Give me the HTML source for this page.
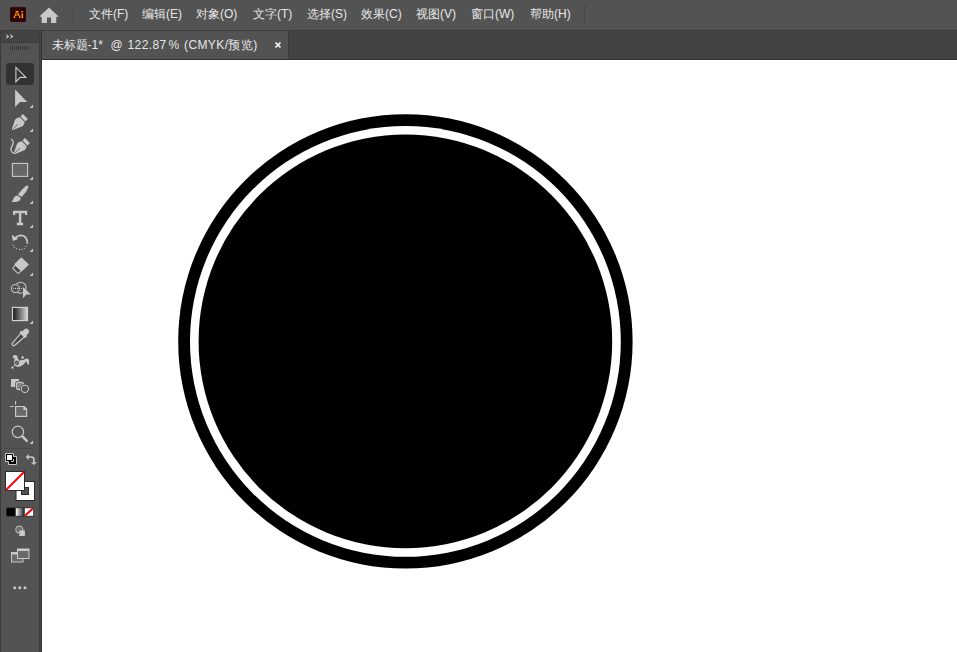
<!DOCTYPE html>
<html><head><meta charset="utf-8">
<style>
*{margin:0;padding:0;box-sizing:border-box}
html,body{width:957px;height:652px;overflow:hidden;background:#535353;font-family:"Liberation Sans",sans-serif}
.abs{position:absolute}
#menubar{left:0;top:0;width:957px;height:30px;background:#535353}
.mi{position:absolute;top:6px;font-size:12px;line-height:16px;color:#e6e6e6;white-space:nowrap}
.sep{position:absolute;top:5px;width:1px;height:19px;background:#474747}
#topline{left:0;top:30px;width:957px;height:1px;background:#3a3a3a}
#tabbar{left:41px;top:31px;width:916px;height:29px;background:#434343}
#tab{left:42px;top:31px;width:246px;height:28px;background:#535353}
#tabline{left:41px;top:59px;width:916px;height:1px;background:#333}
.tt{position:absolute;top:37px;font-size:12px;line-height:16px;color:#e6e6e6;white-space:nowrap}
#canvas{left:42px;top:60px;width:915px;height:592px;background:#fff}
#panel{left:0;top:31px;width:39px;height:621px;background:#535353}
#pl0{left:0;top:31px;width:1px;height:621px;background:#3a3a3a}
#phead{left:1px;top:31px;width:38px;height:11px;background:#434343}
#pheadl{left:0;top:42px;width:39px;height:1px;background:#3a3a3a}
#pr1{left:39px;top:31px;width:1px;height:621px;background:#3e3e3e}
#pr2{left:40px;top:31px;width:1px;height:621px;background:#434343}
#pr3{left:41px;top:31px;width:1px;height:621px;background:#353535}
.grip{position:absolute;top:46px;width:1px;height:4px;background:#363636}
</style></head><body>
<div id="menubar" class="abs"></div>
<div id="topline" class="abs"></div>
<div id="tabbar" class="abs"></div>
<div id="tab" class="abs"></div>
<div id="tabline" class="abs"></div>
<div class="abs" style="left:288px;top:31px;width:1px;height:28px;background:#3b3b3b"></div>
<div class="tt" style="left:51.5px">未标题-1*</div><div class="tt" style="left:110.5px">@</div><div class="tt" style="left:127.5px;letter-spacing:0.4px">122.87</div><div class="tt" style="left:168.5px">%</div><div class="tt" style="left:184px;letter-spacing:0.4px">(CMYK/预览)</div>
<div id="canvas" class="abs">
<svg width="915" height="592" style="position:absolute;left:0;top:0">
<circle cx="363.4" cy="281.4" r="227.2" fill="#000"/>
<circle cx="363.4" cy="281.4" r="215.4" fill="#fff"/>
<circle cx="363.4" cy="281.4" r="206.8" fill="#000"/>
</svg>
</div>
<div id="panel" class="abs"></div>
<div id="pl0" class="abs"></div>
<div id="phead" class="abs"></div>
<div id="pheadl" class="abs"></div>
<div id="pr1" class="abs"></div>
<div id="pr2" class="abs"></div>
<div id="pr3" class="abs"></div>
<div class="grip" style="left:10px"></div><div class="grip" style="left:12px"></div><div class="grip" style="left:14px"></div><div class="grip" style="left:16px"></div><div class="grip" style="left:18px"></div><div class="grip" style="left:20px"></div><div class="grip" style="left:22px"></div><div class="grip" style="left:24px"></div><div class="grip" style="left:26px"></div><div class="grip" style="left:28px"></div>
<div class="mi" style="left:89px">文件(F)</div>
<div class="mi" style="left:142px">编辑(E)</div>
<div class="mi" style="left:196px">对象(O)</div>
<div class="mi" style="left:253px">文字(T)</div>
<div class="mi" style="left:307px">选择(S)</div>
<div class="mi" style="left:361px">效果(C)</div>
<div class="mi" style="left:416px">视图(V)</div>
<div class="mi" style="left:471px">窗口(W)</div>
<div class="mi" style="left:530px">帮助(H)</div>
<div class="sep" style="left:73px"></div>
<div class="sep" style="left:584px"></div>
<svg id="icons" width="957" height="652" style="position:absolute;left:0;top:0">
<!-- Ai logo -->
<rect x="10" y="7" width="16" height="15" rx="1.5" fill="#300000" stroke="#3f4a48" stroke-width="0.4"/>
<g fill="none" stroke="#ff9a00" stroke-width="1.05">
<path d="M15.6 11.6H18.4M16.4 12.4L14.4 17.3M17.7 12.4L19.8 17.3M15.3 15H18.8M13.7 17.5H15.2M19 17.5H20.6"/>
</g>
<rect x="21.3" y="11" width="1.9" height="1.3" fill="#ff9a00"/>
<rect x="21.5" y="13.4" width="1.6" height="4.6" fill="#ff9a00"/>
<!-- home -->
<path d="M49 7.6L58.4 16.2Q58.6 16.7 58 16.8H56.3V23H51V17.6H47V23H41.7V16.8H40Q39.4 16.7 39.6 16.2Z" fill="#c8c8c8"/>
<!-- panel >> -->
<path d="M5.8 33.9L9.2 36.5L5.8 39.1L7 36.5Z M9.9 33.9L13.3 36.5L9.9 39.1L11.1 36.5Z" fill="#d0d0d0"/>
<!-- tab close -->
<path d="M275.5 42.5L280.5 47.5M280.5 42.5L275.5 47.5" stroke="#f4f4f4" stroke-width="1.75"/>
<!-- tool: select (selected) -->
<rect x="6" y="63" width="28" height="22" rx="3" fill="#323232"/>
<path d="M15.9 67.3V81.7L20.1 77.3H25.9Z" fill="none" stroke="#c8c8c8" stroke-width="1.15" stroke-linejoin="miter"/>
<!-- direct select -->
<path d="M15.1 89.6V107L20 101.9H27.3Z" fill="#c8c8c8"/>
<g fill="#c8c8c8">
<path d="M33 104.5V108H29.5Z"/>
<path d="M33 128.5V132H29.5Z"/>
<path d="M33 176.5V180H29.5Z"/>
<path d="M33 200.5V204H29.5Z"/>
<path d="M33 224.5V228H29.5Z"/>
<path d="M33 248.5V252H29.5Z"/>
</g>
<!-- pen -->
<g id="pen" fill="#c8c8c8">
<path d="M20.5 116.5L22.9 114L27.9 119L25.4 121.4Z"/>
<path d="M19.8 117.3L24.6 122.1Q24.4 124.8 22.9 126.1L13.3 130Q11.8 130.2 11.9 128.7L15 120Q15.6 118.6 17.2 118.1Z"/>
</g>
<path d="M12.8 129.2L17.8 124.2" stroke="#535353" stroke-width="0.8"/>
<!-- curvature -->
<g transform="translate(2,24)" fill="#c8c8c8">
<path d="M20.5 116.5L22.9 114L27.9 119L25.4 121.4Z"/>
<path d="M19.8 117.3L24.6 122.1Q24.4 124.8 22.9 126.1L13.3 130Q11.8 130.2 11.9 128.7L15 120Q15.6 118.6 17.2 118.1Z"/>
<path d="M12.8 129.2L17.8 124.2" stroke="#535353" stroke-width="0.8"/>
</g>
<path d="M11.3 139.3Q13.8 141.2 13.3 143Q12.2 146 11 148.5Q10.4 151.5 13.8 153.3" fill="none" stroke="#c8c8c8" stroke-width="1.3" stroke-linecap="round"/>
<!-- rect -->
<rect x="12.4" y="163.4" width="15.2" height="13" fill="#676767" stroke="#c8c8c8" stroke-width="1.1"/>
<!-- brush -->
<path d="M27.3 185.5Q28.7 185.7 28.3 187.5Q26.4 192.4 21.7 197L18 194.4Q21.6 189.4 25.9 185.9Z" fill="#c8c8c8"/>
<path d="M17.6 195.6L20.6 197.8Q20.8 199.2 19.6 200.6Q18.2 201.9 15.8 201.9H11.7Q13 199.8 14 197.4Q15.2 195.8 17.6 195.6Z" fill="#c8c8c8"/>
<!-- type -->
<path d="M13 210.8H27.2V215H25V213.2H21.3V222.8H23.1V225.2H16.8V222.8H18.9V213.2H15.2V215H13Z" fill="#c8c8c8"/>
<!-- rotate -->
<path d="M15.6 237.6Q17.8 235.2 21 235.3Q27.3 235.7 27.4 243.8" fill="none" stroke="#c8c8c8" stroke-width="1.7"/>
<path d="M11.8 234.8L12.8 241L18.2 238.9Z" fill="#c8c8c8"/>
<g fill="#c8c8c8">
<circle cx="13.2" cy="245.2" r="0.6"/><circle cx="14.5" cy="247.3" r="0.6"/><circle cx="16.3" cy="248.6" r="0.6"/><circle cx="19.4" cy="249.4" r="0.6"/><circle cx="21.8" cy="249.3" r="0.6"/><circle cx="24.3" cy="248.3" r="0.6"/><circle cx="26.1" cy="246.3" r="0.6"/>
</g>
</svg>
<svg id="icons2" width="957" height="652" style="position:absolute;left:0;top:0">
<g fill="#c8c8c8">
<path d="M33 272.5V276H29.5Z"/>
<path d="M33 320.5V324H29.5Z"/>
<path d="M33 440.5V444H29.5Z"/>
</g>
<!-- eraser -->
<path d="M15.6 265.1L21.2 270.7L18.7 273.2Q18.2 273.7 17.7 273.2L13.1 268.6Q12.6 268.1 13.1 267.6Z" fill="#484848" stroke="#c8c8c8" stroke-width="1.1"/>
<path d="M21.3 257.2L29 264.5L21.7 271.6L14.2 264.2Z" fill="#c8c8c8"/>
<!-- shaper -->
<circle cx="20.6" cy="287.8" r="5.5" fill="none" stroke="#c8c8c8" stroke-width="1.1"/>
<circle cx="15.3" cy="288.5" r="4" fill="#535353" stroke="#c8c8c8" stroke-width="1.1"/>
<path d="M16.14 284.6A4 4 0 0 1 17.1 292.1" fill="none" stroke="#8c8c8c" stroke-width="1.1"/>
<g fill="#d8d8d8">
<circle cx="13.5" cy="288.5" r="0.6"/><circle cx="15.6" cy="288.5" r="0.6"/><circle cx="17.6" cy="288.5" r="0.6"/><circle cx="19.6" cy="288.5" r="0.6"/><circle cx="21.6" cy="288.5" r="0.6"/>
</g>
<path d="M22.6 286.4V298.8L26.4 294.9H31.4Z" fill="#535353"/>
<path d="M23 287V298.2L26.4 294.6H30.9Z" fill="#c8c8c8"/>
<!-- gradient -->
<defs><linearGradient id="gr" x1="0" x2="1" y1="0" y2="0"><stop offset="0" stop-color="#111"/><stop offset="1" stop-color="#d8d8d8"/></linearGradient>
<linearGradient id="gr2" x1="0" x2="1" y1="0" y2="0"><stop offset="0" stop-color="#fff"/><stop offset="1" stop-color="#222"/></linearGradient></defs>
<rect x="12.5" y="307.4" width="15" height="13.2" fill="url(#gr)" stroke="#d0d0d0" stroke-width="1.2"/>
<!-- eyedropper -->
<g transform="translate(19.9 337.8) rotate(45)">
<path d="M-2.8 -5V-9.4Q-2.8 -11.6 0 -11.8Q2.8 -11.6 2.8 -9.4V-5Z" fill="#c8c8c8"/>
<rect x="-4" y="-6.4" width="8" height="3.4" rx="0.9" fill="#c8c8c8"/>
<path d="M-2.4 -3.2L-1.7 8.4Q-1.7 10.5 0 10.5Q1.7 10.5 1.7 8.4L2.4 -3.2" fill="#535353" stroke="#c8c8c8" stroke-width="1.2"/>
<path d="M-1.4 -1.6H1.4M-1.3 0.4H1.3M-1.2 2.4H1.2M-1.1 4.4H1.1" stroke="#393939" stroke-width="1"/>
</g>
<!-- puppet warp -->
<path d="M12.8 358.4Q12.4 355.4 14.8 355Q17.6 355 17.7 358.2Q18.1 360.3 21 360.3Q24 360 26.2 358.6Q29 357.9 29.2 361Q29.1 363.6 28.5 365.3Q27.2 364.6 27 362.6Q26.7 361.5 25.8 362Q23 365.8 19.5 366.8Q15.4 367 14.4 364.5Q13.7 362 14.5 359.7Q14.7 357.8 13.9 357.7Q13.3 358 12.8 358.4Z" fill="#c8c8c8"/>
<path d="M12.4 367.5L22.6 357.5" stroke="#d0d0d0" stroke-width="0.8"/>
<path d="M18.6 361.2L21.8 358.3" stroke="#3c3c3c" stroke-width="0.9"/>
<circle cx="16.9" cy="362.8" r="1.7" fill="#505050" stroke="#3a3a3a" stroke-width="0.8"/>
<path d="M15.7 364L18.1 361.6" stroke="#d0d0d0" stroke-width="0.7"/>
<circle cx="22.6" cy="357.5" r="1.4" fill="#dcdcdc" stroke="#3a3a3a" stroke-width="0.4"/>
<rect x="11.1" y="366.2" width="2.6" height="2.5" fill="#dcdcdc" stroke="#3a3a3a" stroke-width="0.4"/>
<!-- shape builder -->
<rect x="11" y="379" width="8" height="7.9" fill="#c8c8c8"/>
<rect x="16.4" y="382.4" width="7.2" height="7.2" rx="2" fill="#535353" stroke="#535353" stroke-width="2.6"/><rect x="16.4" y="382.4" width="7.2" height="7.2" rx="2" fill="#858585" stroke="#c8c8c8" stroke-width="1.1"/>
<circle cx="24.9" cy="388.9" r="3.6" fill="none" stroke="#535353" stroke-width="2.6"/><circle cx="24.9" cy="388.9" r="3.6" fill="#535353" stroke="#c8c8c8" stroke-width="1.1"/>
<!-- artboard -->
<path d="M15.55 401V404.8M10 406.5H13.9" stroke="#c8c8c8" stroke-width="1.1"/>
<path d="M15.6 406.5H24.2L26.6 409V416.4H15.6Z" fill="#6a6a6a" stroke="#c8c8c8" stroke-width="1.2"/>
<path d="M23.4 406.5V410H26.6V409.2L24 406.5Z" fill="#c8c8c8"/>
<!-- zoom -->
<circle cx="17.9" cy="431.9" r="5.7" fill="none" stroke="#c8c8c8" stroke-width="1.2"/>
<path d="M22.4 436.4L26.8 440.8" stroke="#c8c8c8" stroke-width="2.6" stroke-linecap="round"/>
<!-- separator -->
<rect x="5" y="448" width="30" height="1" fill="#4a4a4a"/>
<!-- default fill/stroke -->
<path d="M5.5 453.5H13.5V456.5H16.5V464.5H8.5V461.5H5.5Z" fill="#000" stroke="#c8c8c8" stroke-width="1"/>
<rect x="7" y="455" width="5" height="5" fill="#fff"/>
<path d="M11 461.5H13.5V459" fill="none" stroke="#c8c8c8" stroke-width="1"/>
<!-- swap -->
<path d="M27.5 457H31.4Q33.9 457 33.9 459.5V462.6" fill="none" stroke="#c8c8c8" stroke-width="1.7"/>
<path d="M25.8 457L28.7 454V460Z M33.9 465L30.9 462.2H36.9Z" fill="#c8c8c8"/>
<!-- stroke box -->
<rect x="16" y="481.5" width="18.5" height="19" fill="#fff" stroke="#2b2b2b" stroke-width="1"/>
<rect x="21.5" y="487.5" width="7" height="7" fill="#535353" stroke="#2b2b2b" stroke-width="1"/>
<!-- fill box -->
<rect x="5.5" y="471.5" width="19" height="19" fill="#fff" stroke="#2b2b2b" stroke-width="1"/>
<path d="M6 490L24 472" stroke="#ff0000" stroke-width="2"/>
<!-- color modes -->
<rect x="6" y="507.5" width="28" height="9" fill="#2b2b2b"/>
<rect x="6.8" y="508.2" width="8.4" height="7.6" fill="#000"/>
<rect x="15.8" y="508.2" width="8.4" height="7.6" fill="url(#gr2)"/>
<rect x="24.8" y="508.2" width="8.4" height="7.6" fill="#fff"/>
<path d="M25.2 515.6L32.8 508.4" stroke="#ff0000" stroke-width="2"/>
<!-- draw modes -->
<circle cx="19.3" cy="529.6" r="3.6" fill="#6a6a6a" stroke="#c8c8c8" stroke-width="1"/>
<rect x="19.3" y="530.3" width="5.6" height="5.7" fill="#c8c8c8"/>
<!-- screen mode -->
<rect x="11.5" y="552.5" width="11.5" height="9.5" fill="#6a6a6a" stroke="#c8c8c8" stroke-width="1"/>
<rect x="11.5" y="552.5" width="11.5" height="2" fill="#c8c8c8"/>
<rect x="17.5" y="549" width="11.5" height="9.5" fill="#6a6a6a" stroke="#c8c8c8" stroke-width="1"/>
<rect x="17.5" y="549" width="11.5" height="2" fill="#c8c8c8"/>
<!-- more -->
<g fill="#c8c8c8"><circle cx="14.7" cy="587.8" r="1.5"/><circle cx="19.8" cy="587.8" r="1.5"/><circle cx="25" cy="587.8" r="1.5"/></g>
</svg>
</body></html>
